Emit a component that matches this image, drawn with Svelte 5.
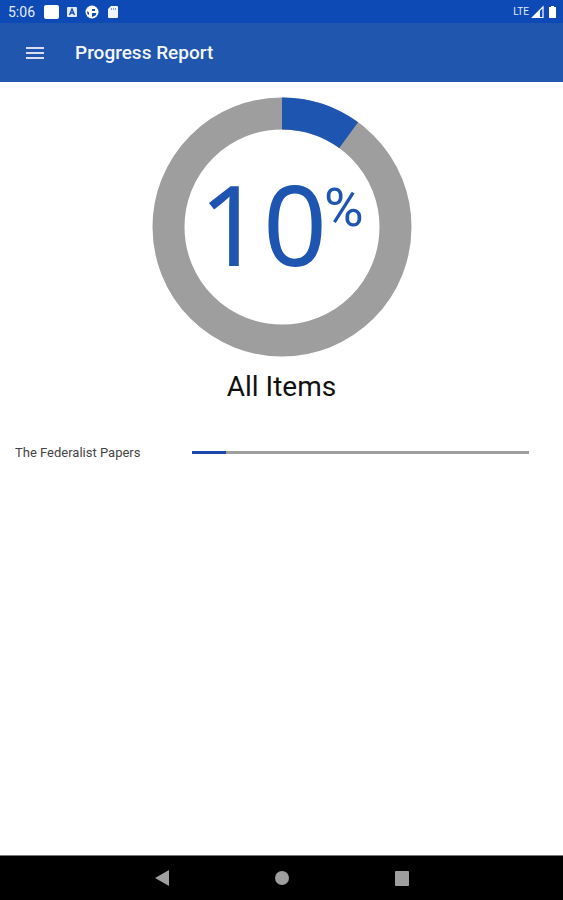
<script lang="ts">
  interface Item {
    id: string;
    title: string;
    percent: number;
  }

  const items: Item[] = [
    { id: "federalist", title: "The Federalist Papers", percent: 10 },
  ];

  const total = $derived(
    Math.round(items.reduce((sum, i) => sum + i.percent, 0) / items.length),
  );
</script>

<div class="screen">
  <div class="status-bar">
    <span class="clock">5:06</span>
    <svg class="notifications" viewBox="0 0 76 16" aria-hidden="true">
      <rect x="0" y="1" width="15" height="14" rx="2" fill="#fff" />
      <rect x="23" y="3" width="10" height="10" rx="1" fill="#e3ebfa" />
      <path d="M25.5 11 28 5l2.5 6M26.5 9h3" fill="none" stroke="#0f4cb6" stroke-width="1.3" />
      <circle cx="48" cy="8" r="6.5" fill="#fff" />
      <path d="M48 5h3v2h-3z" fill="#0f4cb6" />
      <path d="M48 9h4.5l-1 2.500L48 13z" fill="#0f4cb6" />
      <path d="M43 7l2 1.500v2.500l-1.500-1z" fill="#0f4cb6" />
      <path d="M67 2h6a1 1 0 0 1 1 1v10a1 1 0 0 1-1 1h-8a1 1 0 0 1-1-1V5z" fill="#f1f5fd" />
      <path d="M67.500 4v2M69.500 4v2M71.500 4v2" stroke="#7f9fd8" stroke-width="1" />
    </svg>
    <span class="network">LTE</span>
    <svg class="signal" viewBox="0 0 26 16" aria-hidden="true">
      <path d="M1.5 13.5 12 3v10.5z" fill="none" stroke="#fff" stroke-width="1.2" />
      <path d="M1 14 9 6v8z" fill="#fff" />
      <path d="M20 2h3v1h2v11h-7V3h2z" fill="#fff" />
    </svg>
  </div>

  <header class="app-bar">
    <button class="menu" aria-label="Open menu">
      <svg viewBox="0 0 18 14" aria-hidden="true">
        <path d="M0 2h18M0 7h18M0 12h18" stroke="#dcdcf6" stroke-width="2" />
      </svg>
    </button>
    <h1>Progress Report</h1>
  </header>

  <main>
    <section class="summary">
      <svg class="ring" viewBox="0 0 260 260" role="img" aria-label="{total}% complete">
        <circle class="ring-track" cx="130" cy="130" r="113.5" />
        <circle
          class="ring-value"
          cx="130"
          cy="130"
          r="113.5"
          pathLength="100"
          stroke-dasharray="{total} 100"
          transform="rotate(-90 130 130)"
        />
        <text class="number" x="47" y="169">{total}</text>
        <text class="sign" x="172" y="129">%</text>
      </svg>
      <h2>All Items</h2>
    </section>

    <ul class="items">
      {#each items as item (item.id)}
        <li>
          <label for={item.id}>{item.title}</label>
          <progress id={item.id} max="100" value={item.percent}></progress>
        </li>
      {/each}
    </ul>
  </main>

  <nav class="system-nav">
    <button aria-label="Back">
      <svg viewBox="0 0 16 16" aria-hidden="true"><path d="M1 8 15 0v16z" /></svg>
    </button>
    <button aria-label="Home">
      <svg viewBox="0 0 16 16" aria-hidden="true"><circle cx="8" cy="8" r="7" /></svg>
    </button>
    <button aria-label="Recent apps">
      <svg viewBox="0 0 16 16" aria-hidden="true"><rect x="1" y="1" width="14" height="15" rx="1" /></svg>
    </button>
  </nav>
</div>

<style>
  :global(body) {
    margin: 0;
    background: #fff;
  }

  .screen {
    display: flex;
    flex-direction: column;
    min-height: 100vh;
    font-family: Roboto, "Liberation Sans", sans-serif;
    color: #111;
  }

  button {
    display: flex;
    align-items: center;
    justify-content: center;
    padding: 0;
    border: 0;
    background: none;
    cursor: pointer;
  }

  .status-bar {
    display: flex;
    align-items: center;
    height: 23px;
    padding: 0 6px 0 8px;
    background: #0d4ab6;
    color: #e3ebfa;
  }

  .clock {
    font-size: 14px;
  }

  .notifications {
    width: 76px;
    height: 16px;
    margin-left: 9px;
  }

  .network {
    margin-left: auto;
    font-size: 10px;
  }

  .signal {
    width: 26px;
    height: 16px;
    margin-left: 2px;
  }

  .app-bar {
    display: flex;
    align-items: center;
    height: 59px;
    padding: 0 16px;
    background: #2056ae;
    color: #f4f6fc;
  }

  .menu {
    width: 38px;
    height: 38px;
  }

  .menu svg {
    width: 18px;
    height: 14px;
  }

  h1 {
    margin: 0 0 0 21px;
    font-size: 19px;
    font-weight: 500;
    line-height: 24px;
  }

  main {
    flex: 1;
    padding-top: 15px;
  }

  .summary {
    display: flex;
    flex-direction: column;
    align-items: center;
  }

  .ring {
    width: 260px;
    height: 260px;
  }

  .ring circle {
    fill: none;
    stroke-width: 32px;
  }

  .ring-track {
    stroke: #9e9e9e;
  }

  .ring .ring-value {
    stroke: #1d55b0;
  }

  .ring text {
    fill: #1d55b0;
  }

  .number {
    font-family: "Noto Sans", "Open Sans", sans-serif;
    font-size: 112px;
  }

  .sign {
    font-size: 54px;
  }

  h2 {
    margin: 12px 0 0;
    font-size: 28px;
    font-weight: 400;
    line-height: 36px;
  }

  .items {
    margin: 34px 0 0;
    padding: 0 34px 0 15px;
    list-style: none;
  }

  .items li {
    display: flex;
    align-items: center;
  }

  label {
    flex: 0 0 177px;
    padding-top: 2px;
    font-size: 13px;
    line-height: 24px;
    color: #444;
  }

  progress {
    appearance: none;
    display: block;
    flex: 1;
    min-width: 0;
    height: 3px;
    border: 0;
    background: #9e9e9e;
  }

  progress::-webkit-progress-bar {
    background: #9e9e9e;
  }

  progress::-webkit-progress-value {
    background: #1c47ae;
  }

  progress::-moz-progress-bar {
    background: #1c47ae;
  }

  .system-nav {
    display: flex;
    align-items: center;
    justify-content: center;
    gap: 72px;
    height: 44px;
    border-top: 1px solid #777;
    background: #000;
  }

  .system-nav button {
    width: 48px;
    height: 44px;
  }

  .system-nav svg {
    width: 16px;
    height: 16px;
    fill: #9e9e9e;
  }
</style>
